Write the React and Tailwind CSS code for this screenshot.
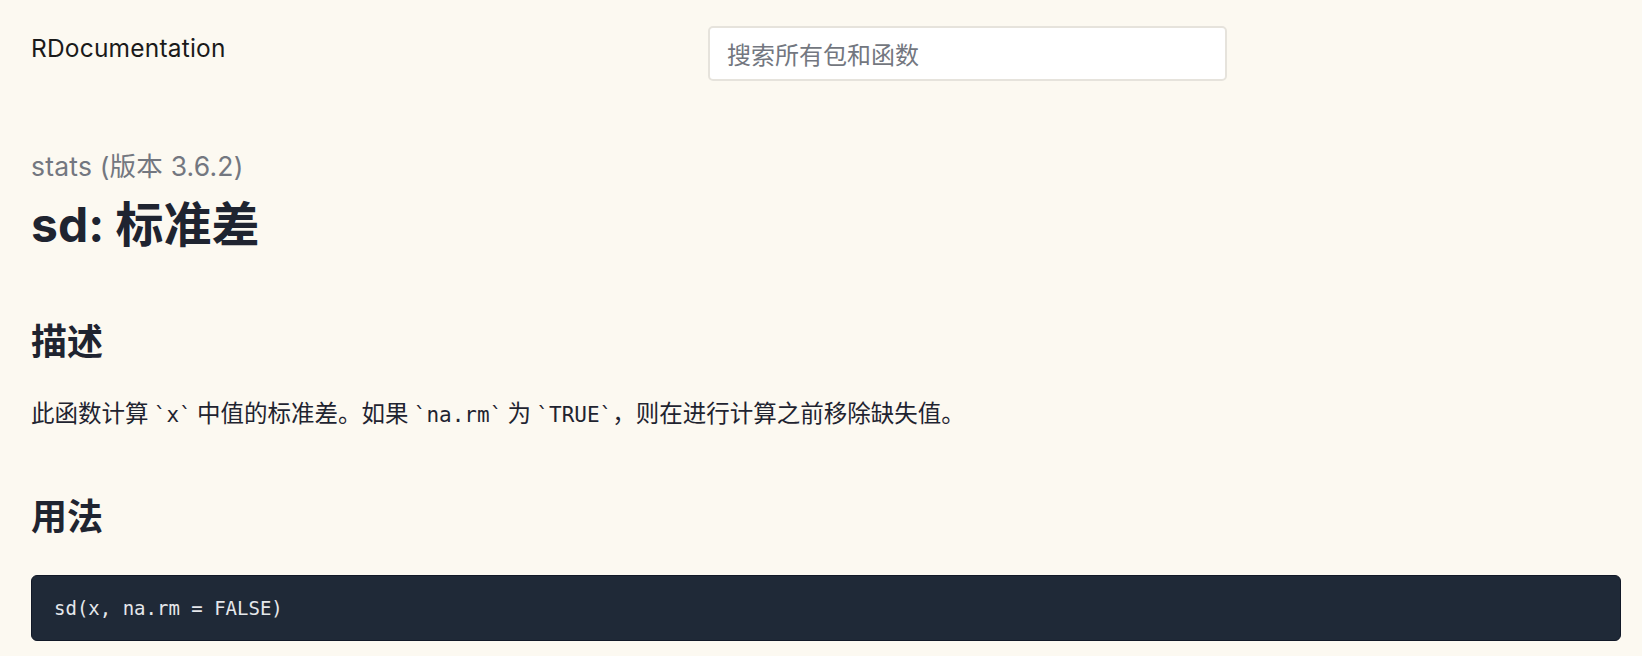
import React from 'react';

const Code = ({ children }) => (
    <code className="font-['DejaVu_Sans_Mono','Liberation_Mono',monospace] text-[21px] leading-none">`{children}`</code>
);

const App = () => {
    return (
        <div className="min-h-[656px] bg-[#fcf9f1] text-[#1f2430] font-['Inter','Noto_Sans_CJK_SC',sans-serif]">
            <header className="flex items-start pl-[31px] pt-[26px]">
                <div className="w-[677px] pt-[7px] text-[24.5px] leading-[30px] tracking-[0.2px] text-[#1a1a1a]">RDocumentation</div>
                <input
                    type="text"
                    placeholder="搜索所有包和函数"
                    className="w-[519px] h-[55px] bg-white border-2 border-[#e6e3dc] rounded-[5px] px-[17px] text-[24px] placeholder:text-[#737780] outline-none font-['Noto_Sans_CJK_SC',sans-serif]"
                />
            </header>

            <main className="pl-[31px] pr-[21px]">
                <div className="mt-[69px] text-[26.5px] leading-[32px] tracking-[0.2px] text-[#737780]">stats (版本 3.6.2)</div>
                <h1 className="mt-[15px] text-[48px] leading-[56px] font-bold text-[#1f2430]">sd: 标准差</h1>

                <h2 className="mt-[64px] text-[36px] leading-[44px] font-bold font-['Noto_Sans_CJK_SC',sans-serif]">描述</h2>
                <p className="mt-[35px] text-[23.5px] leading-[32px] text-[#1f2430] font-['Noto_Sans_CJK_SC',sans-serif]">
                    此函数计算 <Code>x</Code> 中值的标准差。如果 <Code>na.rm</Code> 为 <Code>TRUE</Code>，则在进行计算之前移除缺失值。
                </p>

                <h2 className="mt-[64px] text-[36px] leading-[44px] font-bold font-['Noto_Sans_CJK_SC',sans-serif]">用法</h2>
                <div className="mt-[39px] h-[66px] flex items-center bg-[#1f2937] rounded-[6px] border border-[#111827] px-[22px]">
                    <pre className="font-['DejaVu_Sans_Mono','Liberation_Mono',monospace] text-[19px] text-[#e5e7eb]">sd(x, na.rm = FALSE)</pre>
                </div>
            </main>
        </div>
    );
};

export default App;
